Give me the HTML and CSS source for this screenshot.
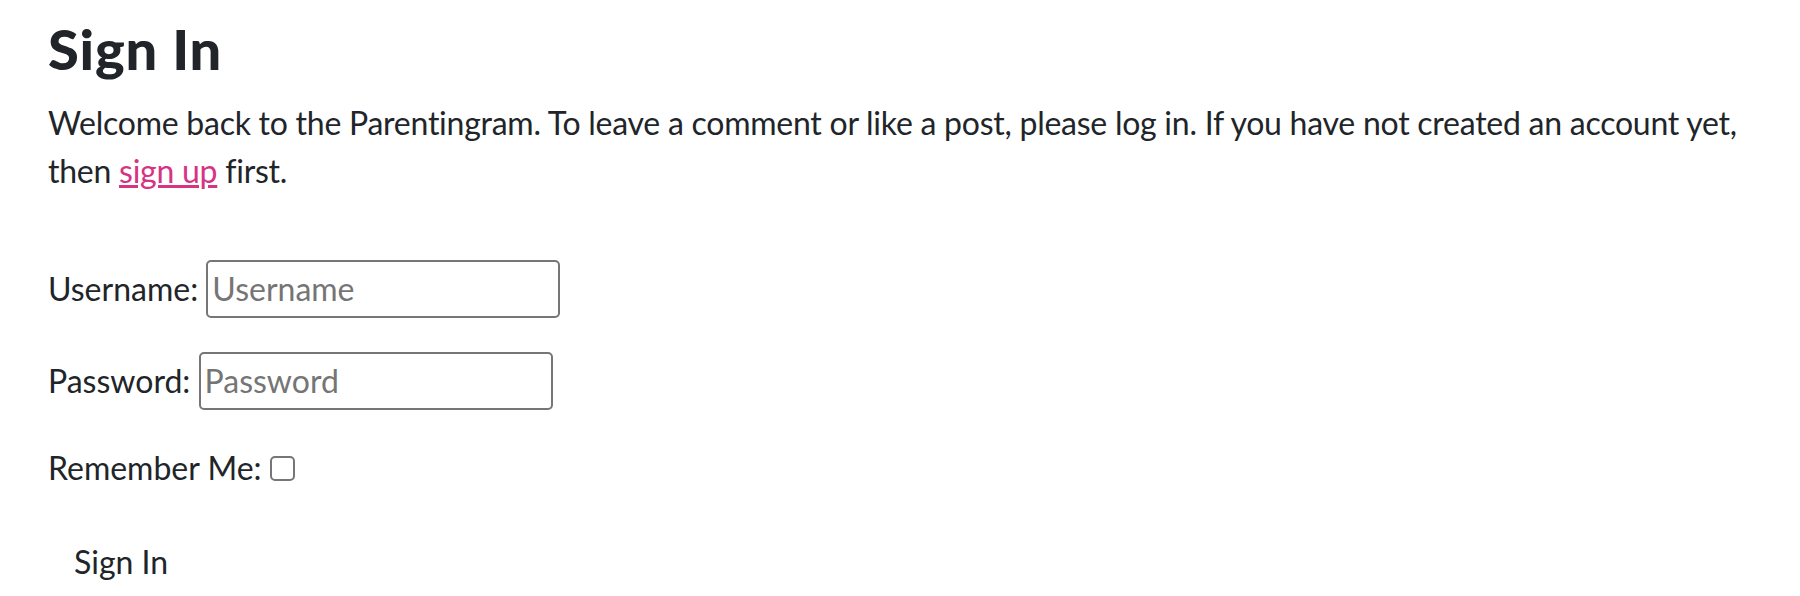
FILE: index.html
```html
<!DOCTYPE html>
<html lang="en">
<head>
<meta charset="utf-8">
<title>Sign In</title>
<link rel="stylesheet" href="styles.css">
</head>
<body>
<main class="page">
  <h1 class="title">Sign In</h1>
  <p class="intro">Welcome back to the Parentingram. To leave a comment or like a post, please log in. If you have not created an account yet, then <a class="link" href="#">sign up</a> first.</p>
  <form class="login-form">
    <p class="row"><label class="label" for="id_login">Username:</label> <input class="field" type="text" id="id_login" placeholder="Username"></p>
    <p class="row"><label class="label" for="id_password">Password:</label> <input class="field" type="password" id="id_password" placeholder="Password"></p>
    <p class="row"><label class="label" for="id_remember">Remember Me:</label> <input class="check" type="checkbox" id="id_remember"></p>
    <button class="submit" type="submit">Sign In</button>
  </form>
</main>
</body>
</html>
```
FILE: styles.css
```css
html, body {
  margin: 0;
  padding: 0;
  background: #ffffff;
}
body {
  font-family: Lato, "Noto Sans", sans-serif;
  font-size: 32px;
  line-height: 48px;
  color: #212529;
  font-variant-ligatures: no-common-ligatures;
}
.page {
  padding: 15px 48px 0 48px;
}
.title {
  margin: 0 0 17px 0;
  font-size: 56px;
  line-height: 1.2;
  font-weight: 900;
  letter-spacing: 0.8px;
}
.intro {
  margin: 0 0 32px 0;
  letter-spacing: -0.25px;
}
.link {
  color: #d63384;
  text-decoration: underline;
}
.login-form {
  margin: 0;
  padding-top: 33px;
}
.row {
  margin: 0 0 34px 0;
}
.label {
  color: #212529;
}
.field {
  font: inherit;
  line-height: 48px;
  width: 354px;
  box-sizing: border-box;
  padding: 3px 4px;
  border: 2px solid #767676;
  border-radius: 5px;
  color: #212529;
  background: #fff;
  margin: 0;
}
.field::placeholder {
  color: #757575;
}
.check {
  appearance: none;
  -webkit-appearance: none;
  width: 25px;
  height: 25px;
  box-sizing: border-box;
  border: 2px solid #767676;
  border-radius: 5px;
  margin: 0;
  vertical-align: -1px;
  background: #fff;
}
.submit {
  font: inherit;
  line-height: 48px;
  color: #212529;
  background: transparent;
  border: 2px solid transparent;
  padding: 10px 24px;
  margin: 0;
}
```
